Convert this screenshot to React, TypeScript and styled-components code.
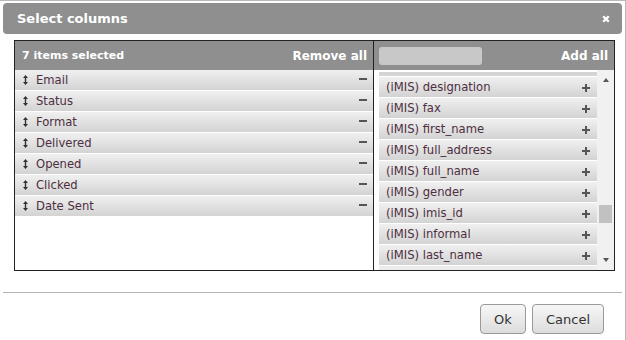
import styled, { createGlobalStyle } from 'styled-components';

const GlobalStyle = createGlobalStyle`
  html, body {
    margin: 0;
    padding: 0;
    background: #fff;
  }
  body {
    font-family: 'DejaVu Sans', Verdana, sans-serif;
  }
`;

const Dialog = styled.div`
  width: 626px;
  height: 340px;
  box-sizing: border-box;
  border-top: 1px solid #b8b8b8;
  border-right: 1px solid #b8b8b8;
  padding: 2px 3px 0 3px;
  background: #fff;
  display: flex;
  flex-direction: column;
`;

const TitleBar = styled.div`
  height: 31px;
  border-radius: 4px;
  background: #8e8f8e;
  display: flex;
  align-items: center;
  justify-content: space-between;
  padding: 0 12px 0 14px;
`;

const Title = styled.span`
  color: #fff;
  font-weight: bold;
  font-size: 13px;
`;

const Body = styled.div`
  padding: 6px 7px 0 11px;
`;

const Box = styled.div`
  display: flex;
  height: 231px;
  box-sizing: border-box;
  border: 1px solid #222;
`;

const Pane = styled.div<{ $width: number; $divider?: boolean }>`
  width: ${(p) => p.$width}px;
  box-sizing: border-box;
  display: flex;
  flex-direction: column;
  border-right: ${(p) => (p.$divider ? '1px solid #222' : 'none')};
`;

const PaneHeader = styled.div<{ $padLeft: number }>`
  height: 29px;
  flex: none;
  background: #8e8f8e;
  display: flex;
  align-items: center;
  justify-content: space-between;
  padding: 0 6px 0 ${(p) => p.$padLeft}px;
  color: #fff;
  font-weight: bold;
`;

const HeaderLabel = styled.span<{ $size: number }>`
  font-size: ${(p) => p.$size}px;
`;

const Search = styled.div`
  width: 103px;
  height: 18px;
  border-radius: 3px;
  background: #c8c8c8;
  margin-top: 1px;
`;

const Row = styled.div<{ $pad: number }>`
  height: 21px;
  flex: none;
  box-sizing: border-box;
  border-bottom: 1px solid #fff;
  background: linear-gradient(#f0f0f0, #d3d3d3);
  display: flex;
  align-items: center;
  padding: 0 ${(p) => p.$pad}px 0 7px;
  font-size: 11.6px;
  color: #4d2f3f;
`;

// the cut-off edge of a row scrolled partly out of the list
const RowEdge = styled.div<{ $height: number; $bottom?: boolean }>`
  height: ${(p) => p.$height}px;
  flex: none;
  background: ${(p) => (p.$bottom ? '#d5d5d5' : '#ececec')};
  border-bottom: ${(p) => (p.$bottom ? '1px solid #fff' : 'none')};
`;

const RowText = styled.span`
  flex: 1;
  white-space: nowrap;
`;

const DragIcon = styled.svg`
  width: 5px;
  height: 10px;
  margin: 0 8px 0 1px;
  flex: none;
`;

const Minus = styled.div`
  width: 8px;
  height: 2px;
  background: #555;
  margin-top: -3px;
`;

const PlusIcon = styled.svg`
  width: 8px;
  height: 8px;
  margin: 2px 1px 0 0;
`;

const RightBody = styled.div`
  flex: 1;
  display: flex;
  min-height: 0;
`;

const List = styled.div`
  flex: 1;
  overflow: hidden;
  padding: 2px 0 0 5px;
  display: flex;
  flex-direction: column;
`;

const Track = styled.div`
  width: 17px;
  flex: none;
  background: #f1f1f1;
  position: relative;
  display: flex;
  flex-direction: column;
  justify-content: space-between;
  align-items: center;
  padding: 8px 0 8px 1px;
  box-sizing: border-box;
`;

const Arrow = styled.div<{ $up?: boolean }>`
  width: 0;
  height: 0;
  border-left: 3.5px solid transparent;
  border-right: 3.5px solid transparent;
  ${(p) => (p.$up ? 'border-bottom: 4px solid #555;' : 'border-top: 4px solid #555;')}
`;

const Thumb = styled.div`
  position: absolute;
  left: 2px;
  top: 135px;
  width: 13px;
  height: 18px;
  background: #c1c1c1;
`;

const Divider = styled.div`
  height: 1px;
  background: #b4b4b4;
  margin-top: 21px;
`;

const Footer = styled.div`
  display: flex;
  justify-content: flex-end;
  gap: 6px;
  padding: 11px 18px 0 0;
`;

const Button = styled.button<{ $width: number }>`
  width: ${(p) => p.$width}px;
  height: 30px;
  border: 1px solid #9a9a9a;
  border-radius: 4px;
  background: linear-gradient(#f7f7f7, #dcdcdc);
  font-family: 'DejaVu Sans', Verdana, sans-serif;
  font-size: 13px;
  color: #333;
  padding: 0;
`;

const selected = ['Email', 'Status', 'Format', 'Delivered', 'Opened', 'Clicked', 'Date Sent'];

const available = [
  'designation',
  'fax',
  'first_name',
  'full_address',
  'full_name',
  'gender',
  'imis_id',
  'informal',
  'last_name',
].map((name) => `(iMIS) ${name}`);

const App = () => {
  return (
    <>
      <GlobalStyle />
      <Dialog>
        <TitleBar>
          <Title>Select columns</Title>
          <svg width="8" height="8" viewBox="0 0 8 8">
            <path d="M1.2 1.2L6.8 6.8M6.8 1.2L1.2 6.8" stroke="#fff" strokeWidth="2.3" />
          </svg>
        </TitleBar>
        <Body>
          <Box>
            <Pane $width={359} $divider>
              <PaneHeader $padLeft={7}>
                <HeaderLabel $size={11}>7 items selected</HeaderLabel>
                <HeaderLabel $size={12}>Remove all</HeaderLabel>
              </PaneHeader>
              {selected.map((name) => (
                <Row key={name} $pad={6}>
                  <DragIcon viewBox="0 0 5 10">
                    <path d="M2.5 0L5 3H0Z M2.5 10L5 7H0Z" fill="#333" />
                    <rect x="1.8" y="2" width="1.4" height="6" fill="#333" />
                  </DragIcon>
                  <RowText>{name}</RowText>
                  <Minus />
                </Row>
              ))}
            </Pane>
            <Pane $width={240}>
              <PaneHeader $padLeft={5}>
                <Search />
                <HeaderLabel $size={12}>Add all</HeaderLabel>
              </PaneHeader>
              <RightBody>
                <List>
                  <RowEdge $height={4} $bottom />
                  {available.map((name) => (
                    <Row key={name} $pad={6}>
                      <RowText>{name}</RowText>
                      <PlusIcon viewBox="0 0 8 8">
                        <path d="M3 0H5V3H8V5H5V8H3V5H0V3H3Z" fill="#555" />
                      </PlusIcon>
                    </Row>
                  ))}
                  <RowEdge $height={5} />
                </List>
                <Track>
                  <Arrow $up />
                  <Thumb />
                  <Arrow />
                </Track>
              </RightBody>
            </Pane>
          </Box>
        </Body>
        <Divider />
        <Footer>
          <Button $width={46}>Ok</Button>
          <Button $width={72}>Cancel</Button>
        </Footer>
      </Dialog>
    </>
  );
};

export default App;
